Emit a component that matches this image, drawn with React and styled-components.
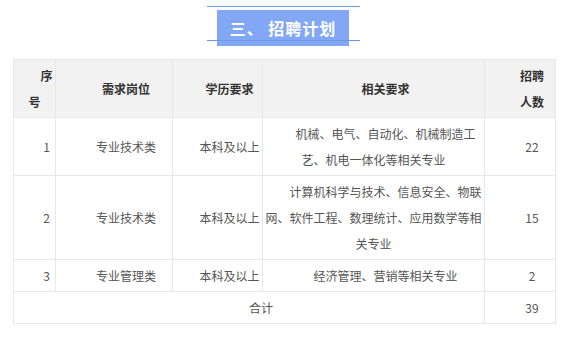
import React from "react"
import styled, { createGlobalStyle } from "styled-components"

const Global = createGlobalStyle`
  body {
    margin: 0;
    background: #fff;
    font-family: "Noto Sans CJK SC", "Liberation Sans", sans-serif;
  }
`

const Page = styled.div`
  width: 582px;
  height: 364px;
  padding: 6px 0 0 13px;
  box-sizing: border-box;
`

const TitleBar = styled.div`
  position: relative;
  width: 153px;
  margin-left: 194px;
  border-top: 1px solid #6f96e3;
  padding: 3px 0 0 10px;
  box-sizing: border-box;
  &::after {
    content: "";
    position: absolute;
    left: 0;
    right: 0;
    bottom: 5px;
    height: 1px;
    background: #6f96e3;
  }
`

const TitleBox = styled.div`
  width: 132px;
  height: 36px;
  background: #82a8f5;
  color: #fff;
  font-size: 16px;
  font-weight: 700;
  line-height: 36px;
  text-align: center;
  letter-spacing: 1px;
`

const Table = styled.table`
  margin-top: 13px;
  width: 542px;
  border-collapse: collapse;
  table-layout: fixed;
  font-size: 12px;
  color: #555;
`

const Cell = styled.td`
  border: 1px solid #e8e8e8;
  padding: 3px 1px 2px;
  text-align: center;
  vertical-align: middle;
  line-height: 26px;
  text-indent: 2em;
  background: ${p => (p.$head ? "#f2f2f2" : "#fff")};
  font-weight: ${p => (p.$head ? 700 : 400)};
  color: ${p => (p.$head ? "#333" : "#555")};
`

const Line = styled.div`
  text-indent: 2em;
`

const widths = [42, 117, 90, 222, 71]

const rows = [
  ["1", "专业技术类", "本科及以上", "机械、电气、自动化、机械制造工艺、机电一体化等相关专业", "22"],
  ["2", "专业技术类", "本科及以上", "计算机科学与技术、信息安全、物联网、软件工程、数理统计、应用数学等相关专业", "15"],
  ["3", "专业管理类", "本科及以上", "经济管理、营销等相关专业", "2"],
]

export default function App() {
  return (
    <>
      <Global />
      <Page>
        <TitleBar>
          <TitleBox>三、 招聘计划</TitleBox>
        </TitleBar>
        <Table>
          <colgroup>
            {widths.map((w, i) => (
              <col key={i} style={{ width: w }} />
            ))}
          </colgroup>
          <tbody>
            <tr>
              <Cell $head>序号</Cell>
              <Cell $head>需求岗位</Cell>
              <Cell $head>学历要求</Cell>
              <Cell $head>相关要求</Cell>
              <Cell $head>
                <Line>招聘</Line>
                <Line>人数</Line>
              </Cell>
            </tr>
            {rows.map(r => (
              <tr key={r[0]}>
                {r.map((c, i) => (
                  <Cell key={i}>{c}</Cell>
                ))}
              </tr>
            ))}
            <tr>
              <Cell colSpan={4}>合计</Cell>
              <Cell>39</Cell>
            </tr>
          </tbody>
        </Table>
      </Page>
    </>
  )
}
